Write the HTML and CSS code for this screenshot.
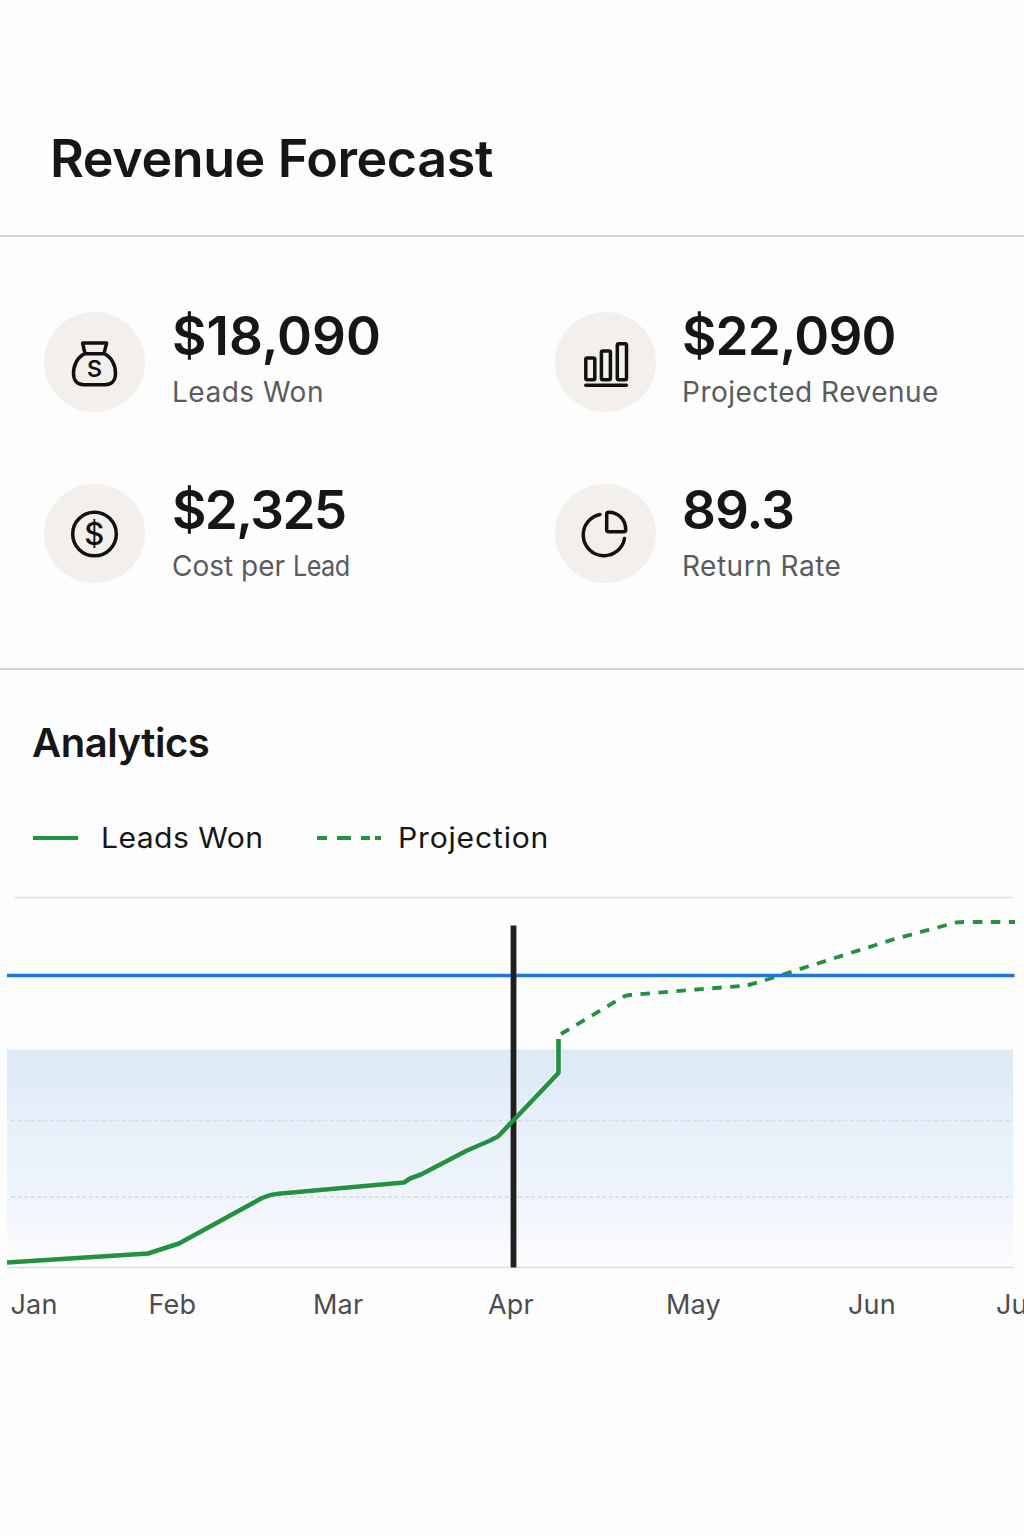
FILE: index.html
```html
<!DOCTYPE html>
<html lang="en">
<head>
    <meta charset="UTF-8">
    <meta name="viewport" content="width=device-width, initial-scale=1.0">
    <title>Revenue Forecast</title>
    <link rel="stylesheet" href="styles.css">
</head>
<body>
    <header class="page-header">
        <h1>Revenue Forecast</h1>
    </header>

    <section class="stats">
        <div class="stat">
            <div class="stat-icon">
                <svg viewBox="0 0 48 48">
                    <path d="M12.600 5.100h24l-2.600 10.600H15zM15 15.700C7.500 19 3.500 27 3.500 35.500c0 7.500 4.500 11.200 10.500 11.200h21c6 0 10.500-3.700 10.500-11.200C45.500 27 41.500 19 34 15.700"/>
                    <text class="bag-sign" x="24.500" y="39.300">S</text>
                </svg>
            </div>
            <div class="stat-text">
                <div class="stat-value won-value">$18,090</div>
                <div class="stat-label">Leads Won</div>
            </div>
        </div>
        <div class="stat">
            <div class="stat-icon">
                <svg viewBox="0 0 48 48">
                    <rect x="4.800" y="20" width="9" height="21.800" rx="1.500"/>
                    <rect x="20.400" y="13" width="9" height="28.800" rx="1.500"/>
                    <rect x="36.300" y="5.800" width="9.200" height="36" rx="1.500"/>
                    <path d="M4.800 47.200h40.500"/>
                </svg>
            </div>
            <div class="stat-text">
                <div class="stat-value">$22,090</div>
                <div class="stat-label">Projected Revenue</div>
            </div>
        </div>
        <div class="stat">
            <div class="stat-icon">
                <svg viewBox="0 0 48 48">
                    <circle cx="24.500" cy="24" r="21.800"/>
                    <text class="coin-sign" x="24.200" y="34.500">$</text>
                </svg>
            </div>
            <div class="stat-text">
                <div class="stat-value cost-value">$2,325</div>
                <div class="stat-label cost-label">Cost per <span>Lead</span></div>
            </div>
        </div>
        <div class="stat">
            <div class="stat-icon">
                <svg viewBox="0 0 48 48">
                    <path d="M19 4.500A20.800 20.800 0 1 0 43.500 28.500"/>
                    <path d="M25.700 4.200a2 2 0 0 1 2-2C37.500 2.200 44.700 10 44.700 19.700a2 2 0 0 1-2 2h-15a2 2 0 0 1-2-2z"/>
                </svg>
            </div>
            <div class="stat-text">
                <div class="stat-value">89.3</div>
                <div class="stat-label">Return Rate</div>
            </div>
        </div>
    </section>

    <section class="analytics">
        <h2>Analytics</h2>
        <div class="legend">
            <svg class="key-solid" viewBox="0 0 45 4"><path d="M0 2h45"/></svg>
            <span class="legend-won">Leads Won</span>
            <svg class="key-dashed" viewBox="0 0 64 4"><path d="M0 2h10M20 2h14M44 2h9M58 2h6"/></svg>
            <span class="legend-projection">Projection</span>
        </div>

        <svg class="chart" viewBox="0 890 1024 440">
            <defs>
                <linearGradient id="area" x1="0" y1="0" x2="0" y2="1">
                    <stop offset="0" stop-color="#dce9f7"/>
                    <stop offset="0.320" stop-color="#e7effa"/>
                    <stop offset="0.650" stop-color="#eef4fc"/>
                    <stop offset="1" stop-color="#fcfcfe"/>
                </linearGradient>
            </defs>
            <path class="rule" d="M15 897.500H1013"/>
            <rect x="7" y="1049.500" width="1006" height="218" fill="url(#area)"/>
            <path class="grid" d="M11 1120.500H1013M11 1197H1013"/>
            <path class="rule" d="M7 1267.500H1013"/>
            <path class="projection" d="M561 1034L623 997Q626 995.300 630 995L746 985.500Q752 984.500 786 973.500L893 939.500L956 922.500Q960 922 966 922H1015"/>
            <path class="target" d="M7 975.500H1014.500"/>
            <path class="today" d="M513.500 925.500V1267.500"/>
            <path class="won-halo" d="M7 1262.500L148 1253.500L179 1243.500L262 1198Q270 1194.500 278 1193.800L404 1182.500L410 1178.500L421 1174.500L467 1150.500L489 1141L498 1136.500L508 1126M520 1113L558.500 1073V1050"/>
            <path class="won" d="M7 1262.500L148 1253.500L179 1243.500L262 1198Q270 1194.500 278 1193.800L404 1182.500L410 1178.500L421 1174.500L467 1150.500L489 1141L498 1136.500L558.500 1073V1039"/>
            <g class="months">
                <text x="10.500" y="1313.500">Jan</text>
                <text x="148.500" y="1313.500">Feb</text>
                <text x="313" y="1313.500">Mar</text>
                <text x="488" y="1313.500">Apr</text>
                <text x="666" y="1313.500">May</text>
                <text x="848" y="1313.500">Jun</text>
                <text x="996" y="1313.500">Jul</text>
            </g>
        </svg>
    </section>
</body>
</html>
```
FILE: styles.css
```css
:root {
    --ink: #161616;
    --muted: #5a5b5d;
    --green: #23913f;
    --blue: #1a78dc;
    --line: #cfd1d3;
}

* {
    box-sizing: border-box;
    margin: 0;
    padding: 0;
}

body {
    min-height: 1536px;
    overflow-x: hidden;
    font-family: Inter, 'Liberation Sans', sans-serif;
    color: var(--ink);
    background: #fdfdfd;
}

svg {
    display: block;
    overflow: visible;
}

.page-header {
    height: 237px;
    padding: 128px 50px 0;
    border-bottom: 2px solid var(--line);
}

h1 {
    font-size: 52px;
    line-height: 62px;
    font-weight: 560;
    letter-spacing: -0.4px;
}

/* Key figures */
.stats {
    display: grid;
    grid-template-columns: 511px 1fr;
    grid-template-rows: 173px 1fr;
    height: 433px;
    padding: 67px 0 0 44px;
    border-bottom: 2px solid var(--line);
}

.stat {
    display: flex;
    gap: 27px;
}

.stat:nth-child(even) {
    gap: 26px;
}

.stat-icon {
    display: flex;
    align-items: center;
    justify-content: center;
    width: 101px;
    height: 100px;
    margin-top: 8px;
    padding-right: 2px;
    border-radius: 50%;
    background: #f3f0ec;
}

.stat:nth-child(even) .stat-icon {
    padding-right: 1px;
}

.stat:nth-child(n + 3) .stat-icon {
    height: 99px;
    margin-top: 7px;
}

.stat-icon svg {
    width: 48px;
    height: 48px;
    fill: none;
    stroke: #111;
    stroke-width: 3.5;
    stroke-linecap: round;
    stroke-linejoin: round;
}

.stat-icon text {
    fill: #111;
    stroke: none;
    text-anchor: middle;
}

.bag-sign {
    font-size: 23px;
    font-weight: 600;
}

.coin-sign {
    font-size: 31px;
    font-weight: 550;
}

.stat-value {
    font-size: 53px;
    line-height: 64px;
    font-weight: 560;
    letter-spacing: -0.9px;
}

.won-value {
    letter-spacing: 0;
}

.cost-value {
    letter-spacing: -1.6px;
}

.stat-label {
    margin-top: 7px;
    font-size: 28px;
    line-height: 34px;
    font-weight: 380;
    color: var(--muted);
    letter-spacing: 0.5px;
}

.stat:nth-child(n + 3) .stat-text {
    padding-top: 1px;
}

.cost-label {
    letter-spacing: 0;
}

/* keep the last word narrow */
.cost-label span {
    display: inline-block;
    letter-spacing: -0.6px;
    transform: scaleX(0.9);
    transform-origin: left;
}

/* Chart */
h2 {
    padding: 49px 0 0 32px;
    font-size: 40px;
    line-height: 48px;
    font-weight: 580;
    letter-spacing: -0.45px;
}

.legend {
    display: flex;
    align-items: center;
    height: 40px;
    margin-top: 51px;
    padding-left: 33px;
    font-size: 28px;
    letter-spacing: 0.4px;
}

.legend svg {
    fill: none;
    stroke: var(--green);
    stroke-width: 4;
}

/* wide-set legend labels */
.legend span {
    transform: scaleX(1.075);
    transform-origin: left;
}

.key-solid {
    width: 45px;
    height: 4px;
    margin-right: 23px;
}

.legend-won {
    width: 216px;
}

.legend-projection {
    letter-spacing: 0.75px;
}

.key-dashed {
    width: 64px;
    height: 4px;
    margin-right: 17px;
}

.chart {
    width: 1024px;
    height: 440px;
    margin-top: 32px;
    fill: none;
}

.rule {
    stroke: #dcdfe2;
    stroke-width: 1.5;
}

.grid {
    stroke: #d6d9dd;
    stroke-width: 1.3;
    stroke-dasharray: 4 2.5;
}

.target {
    stroke: var(--blue);
    stroke-width: 3.4;
}

.today {
    stroke: #20201f;
    stroke-width: 5.8;
}

.won,
.projection {
    stroke: var(--green);
    stroke-width: 4.6;
    stroke-linejoin: round;
}

.won-halo {
    stroke: #fff;
    stroke-opacity: 0.45;
    stroke-width: 7;
}

.projection {
    stroke-width: 3.8;
    stroke-dasharray: 9.500 8.500;
}

.months {
    fill: #4c4d4f;
    font-size: 27px;
    font-weight: 380;
    letter-spacing: 0.2px;
}
```
